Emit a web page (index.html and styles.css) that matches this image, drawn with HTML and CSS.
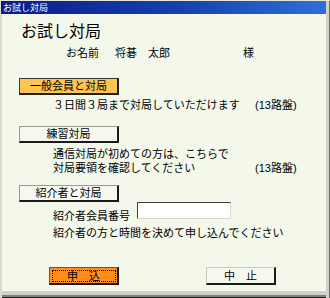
FILE: index.html
```html
<!DOCTYPE html>
<html lang="ja">
<head>
<meta charset="utf-8">
<title>お試し対局</title>
<link rel="stylesheet" href="styles.css">
</head>
<body>
<div class="window">
  <div class="titlebar">お試し対局</div>
  <div class="content">
    <h1 class="heading">お試し対局</h1>
    <div class="name-row">
      <span>お名前</span><span>将碁</span><span>太郎</span><span>様</span>
    </div>

    <button class="opt-btn opt-active first">一般会員と対局</button>
    <div class="desc desc-one">
      <span>３日間３局まで対局していただけます</span><span class="board">(13路盤)</span>
    </div>

    <button class="opt-btn second">練習対局</button>
    <div class="desc desc-two">
      <span>通信対局が初めての方は、こちらで</span><span></span>
      <span>対局要領を確認してください</span><span class="board">(13路盤)</span>
    </div>

    <button class="opt-btn third">紹介者と対局</button>
    <div class="member-row">
      <span class="member-label">紹介者会員番号</span>
      <input class="member-input" type="text">
    </div>
    <div class="member-note">紹介者の方と時間を決めて申し込んでください</div>

    <div class="actions">
      <button class="act-btn act-primary">申　込</button>
      <button class="act-btn act-cancel">中　止</button>
    </div>
  </div>
</div>
</body>
</html>
```

FILE: styles.css
```css
* { box-sizing: border-box; }
html, body { margin: 0; padding: 0; background: #d4d0c8; }
body {
  font-family: "Liberation Sans", "Noto Sans CJK JP", sans-serif;
  font-size: 11px;
  color: #000;
}
.window {
  width: 330px;
  height: 298px;
  background: #f4f8ea;
  padding-top: 1px;
  box-shadow:
    inset 0 1px #e6e4dc,
    inset 2px 0 #dcdad2,
    inset -1px 0 #707070,
    inset -4px 0 #d4d0c8,
    inset 0 -1px #202020,
    inset 0 -3px #808080,
    inset 0 -7px #d4d0c8;
  overflow: hidden;
}
.titlebar {
  height: 13px;
  margin: 0 4px 0 1px;
  background: linear-gradient(to right, #0a1b86, #1541b0 55%, #2e6fd8);
  color: #fff;
  font-family: "Noto Sans CJK JP", sans-serif;
  font-size: 9px;
  line-height: 13px;
  padding-left: 2px;
}
.heading {
  margin: 6px 0 0 21px;
  font-family: "Noto Sans CJK JP", sans-serif;
  font-size: 16px;
  line-height: 20px;
  font-weight: normal;
}
.name-row {
  margin-top: 6px;
  padding-left: 66px;
  display: grid;
  grid-template-columns: 49px 33px 95px auto;
  line-height: 14px;
}
.opt-btn {
  display: block;
  width: 100px;
  height: 17px;
  margin-left: 19px;
  padding: 0;
  font-family: inherit;
  font-size: 11px;
  line-height: 13px;
  color: #000;
  background: #f6f7ef;
  border-style: solid;
  border-width: 1px 2px 2px 1px;
  border-color: #9a9a94 #1a1a1a #1a1a1a #9a9a94;
}
.opt-active {
  background: #ffc552;
  border-color: #3a3a3a #202020 #202020 #3a3a3a;
}
.first { margin-top: 18px; }
.second { margin-top: 14px; }
.third { margin-top: 10px; }
.desc {
  display: grid;
  grid-template-columns: 202px auto;
  padding-left: 53px;
  line-height: 14px;
}
.desc-one { margin-top: 3px; }
.desc-two { margin-top: 4px; }
.member-row {
  display: flex;
  align-items: flex-start;
  height: 17px;
  padding-left: 53px;
  line-height: 14px;
}
.member-label {
  width: 84px;
  margin-top: 7px;
}
.member-input {
  width: 94px;
  height: 17px;
  margin: 0;
  padding: 0;
  background: #fff;
  border-style: solid;
  border-width: 1px;
  border-color: #404040 #d8d8d0 #d8d8d0 #404040;
}
.member-note {
  margin-top: 7px;
  padding-left: 53px;
  line-height: 14px;
}
.actions {
  display: flex;
  gap: 87px;
  margin-top: 27px;
  padding-left: 49px;
}
.act-btn {
  width: 70px;
  height: 18px;
  padding: 0;
  font-family: inherit;
  font-size: 11px;
  line-height: 14px;
  color: #000;
  border-style: solid;
  border-width: 1px 2px 2px 1px;
}
.act-primary {
  background: #ff8c1e;
  border-color: #5a5a5a #1a1a1a #1a1a1a #5a5a5a;
  outline: 1px dotted #000;
  outline-offset: -4px;
}
.act-cancel {
  background: #f6f7ef;
  border-color: #c8c8c0 #1a1a1a #1a1a1a #c8c8c0;
}
```
